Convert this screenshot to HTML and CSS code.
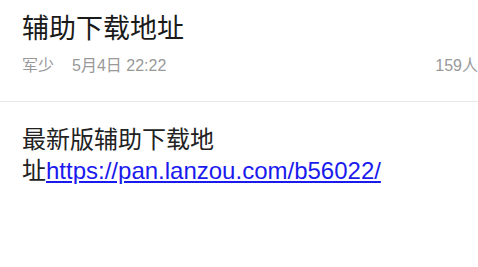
FILE: index.html
```html
<!DOCTYPE html>
<html lang="zh-CN">
<head>
    <meta charset="UTF-8">
    <meta name="viewport" content="width=device-width, initial-scale=1.0">
    <title>辅助下载地址</title>
    <link rel="stylesheet" href="styles.css">
</head>
<body>

<div class="article">
    <div class="header">
        <h1 class="title">辅助下载地址</h1>
        <div class="meta">
            <span class="author">军少</span>
            <span class="date">5月4日 22:22</span>
            <span class="views">159人</span>
        </div>
    </div>
    <div class="content">
        <p>最新版辅助下载地<br>址<a href="https://pan.lanzou.com/b56022/">https://pan.lanzou.com/b56022/</a></p>
    </div>
</div>

</body>
</html>
```

FILE: styles.css
```css
body {
    font-family: 'Liberation Sans', 'Noto Sans CJK SC', sans-serif;
    margin: 0;
    background: #fff;
    color: #222;
}
.header {
    padding: 14px 0 25px 22px;
    border-bottom: 1px solid #e8e8e8;
}
.title {
    margin: 0;
    font-size: 27px;
    font-weight: normal;
    line-height: 30px;
    color: #1a1a1a;
}
.meta {
    display: flex;
    margin-top: 11px;
    font-size: 16px;
    line-height: 21px;
    color: #999;
}
.date {
    margin-left: 18px;
}
.views {
    margin-left: auto;
}
.content {
    padding: 22px 22px;
}
.content p {
    margin: 0;
    font-size: 24px;
    line-height: 31px;
    color: #222;
}
.content a {
    color: #1a1aee;
}
```
